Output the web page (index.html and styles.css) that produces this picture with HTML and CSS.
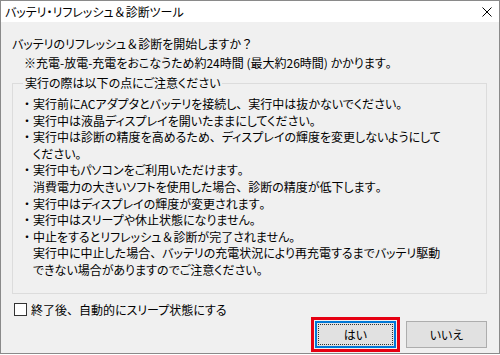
FILE: index.html
```html
<!DOCTYPE html>
<html lang="ja">
<head>
  <meta charset="UTF-8" />
  <title>バッテリ・リフレッシュ＆診断ツール</title>
  <link rel="stylesheet" href="styles.css">
</head>
<body>
  <div class="window">
    <div class="titlebar">
      <span class="title">バッテリ・リフレッシュ<span class="wide">＆</span>診断ツール</span>
      <svg class="close" width="10" height="10" viewBox="0 0 10 10">
        <path d="M0.5 0.5 L9.5 9.5 M9.5 0.5 L0.5 9.5" stroke="#000" stroke-width="1" fill="none"/>
      </svg>
    </div>

    <div class="content">
      <p class="question">バッテリのリフレッシュ<span class="wide">＆</span>診断を開始しますか<span class="wide">？</span></p>
      <p class="note">※充電-放電-充電をおこなうため約24時間 (最大約26時間) かかります<span class="wide">。</span></p>

      <fieldset class="group">
        <legend>実行の際は以下の点にご注意ください</legend>
        <ul class="notes">
          <li>実行前にACアダプタとバッテリを接続し<span class="wide">、</span>実行中は抜かないでください<span class="wide">。</span></li>
          <li>実行中は液晶ディスプレイを開いたままにしてください<span class="wide">。</span></li>
          <li>実行中は診断の精度を高めるため<span class="wide">、</span>ディスプレイの輝度を変更しないようにして<br>ください<span class="wide">。</span></li>
          <li>実行中もパソコンをご利用いただけます<span class="wide">。</span><br>消費電力の大きいソフトを使用した場合<span class="wide">、</span>診断の精度が低下します<span class="wide">。</span></li>
          <li>実行中はディスプレイの輝度が変更されます<span class="wide">。</span></li>
          <li>実行中はスリープや休止状態になりません<span class="wide">。</span></li>
          <li>中止をするとリフレッシュ<span class="wide">＆</span>診断が完了されません<span class="wide">。</span><br>実行中に中止した場合<span class="wide">、</span>バッテリの充電状況により再充電するまでバッテリ駆動<br>できない場合がありますのでご注意ください<span class="wide">。</span></li>
        </ul>
      </fieldset>

      <label class="check">
        <span class="box"></span>
        <span>終了後<span class="wide">、</span>自動的にスリープ状態にする</span>
      </label>

      <div class="buttons">
        <button class="btn default">はい</button>
        <button class="btn">いいえ</button>
      </div>
    </div>
  </div>
</body>
</html>
```

FILE: styles.css
```css
* {
  box-sizing: border-box;
}

body {
  margin: 0;
  padding: 0;
  font-family: "Noto Sans CJK JP", "Meiryo UI", sans-serif;
  font-size: 12px;
  font-feature-settings: "palt";
  color: #000;
  background: #fff;
}

/* full-width punctuation, like Meiryo UI */
.wide {
  font-feature-settings: normal;
}

.window {
  width: 500px;
  height: 354px;
  border: 1px solid #8a8a8a;
  display: flex;
  flex-direction: column;
  background: #f0f0f0;
}

.titlebar {
  height: 21px;
  background: #fff;
  display: flex;
  align-items: center;
  justify-content: space-between;
  padding: 0 7px 0 4px;
}

.title {
  font-size: 12px;
  line-height: 14px;
}

.close {
  display: block;
}

.content {
  flex: 1;
  display: flex;
  flex-direction: column;
  padding: 12px 12px 0 11px;
}

p {
  margin: 0;
}

.question {
  line-height: 19px;
}

.note {
  line-height: 19px;
  padding-left: 12px;
}

.group {
  margin: 3px 0 0;
  border: 1px solid #dcdcdc;
  padding: 0 0 14px 8px;
  min-width: 0;
}

.group legend {
  padding: 0 2px;
  margin-left: 2px;
  line-height: 16px;
}

.notes {
  list-style: none;
  margin: 5px 0 0;
  padding: 0;
  line-height: 16.6px;
}

.notes li {
  padding-left: 12px;
}

.notes li::before {
  content: "・";
  display: inline-block;
  width: 12px;
  margin-left: -12px;
  text-align: center;
  font-feature-settings: normal;
}

.check {
  display: flex;
  align-items: center;
  gap: 4px;
  margin: 8px 0 0 2px;
  line-height: 16px;
}

.check .box {
  width: 13px;
  height: 13px;
  border: 1px solid #333;
  background: #fff;
}

.buttons {
  display: flex;
  justify-content: flex-end;
  gap: 10px;
  margin-top: 3px;
}

.btn {
  width: 81px;
  height: 27px;
  font-family: inherit;
  font-size: 12px;
  font-feature-settings: "palt";
  background: #e1e1e1;
  border: 1px solid #adadad;
  padding: 0;
  position: relative;
}

.btn.default {
  border: 2px solid #0078d7;
  outline: 3px solid #e60012;
  outline-offset: 1px;
}

.btn.default::after {
  content: "";
  position: absolute;
  inset: 1px;
  border: 1px dotted #333;
}
```
